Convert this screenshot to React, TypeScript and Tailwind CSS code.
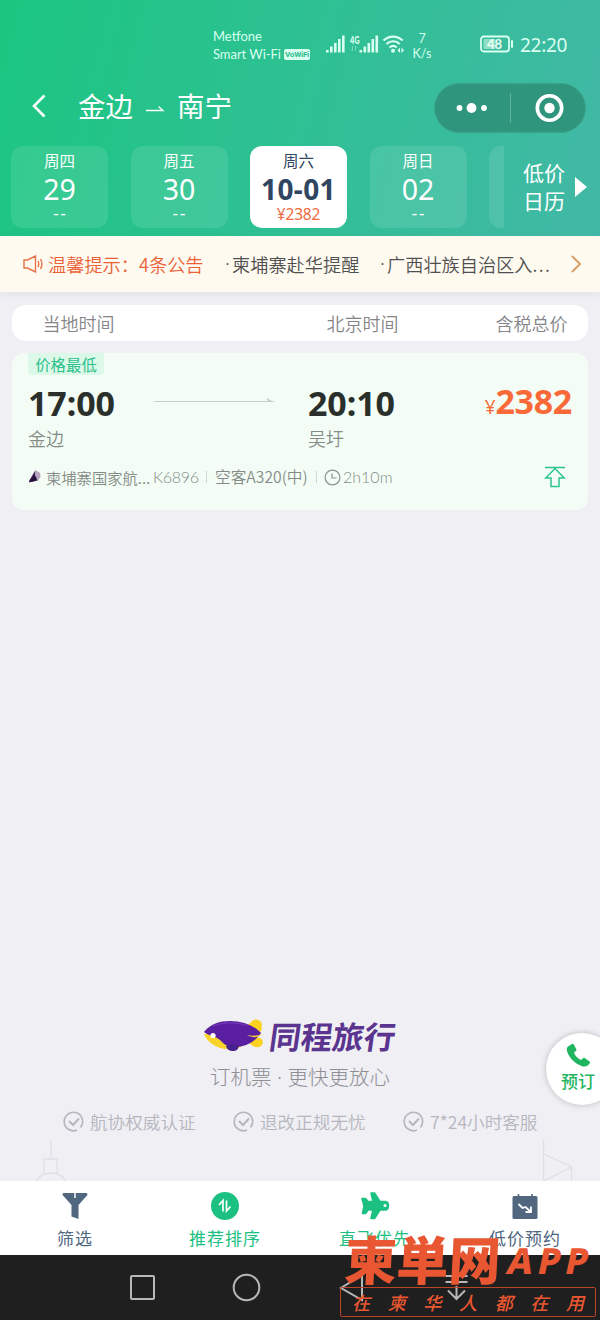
import React from "react";

const days = [
  { week: "周四", day: "29", price: "--" },
  { week: "周五", day: "30", price: "--" },
  { week: "周六", day: "10-01", price: "¥2382", active: true },
  { week: "周日", day: "02", price: "--" },
  { week: "", day: "", price: "" },
];

const promises = [
  { text: "航协权威认证", width: "w-[170px]" },
  { text: "退改正规无忧", width: "w-[170px]" },
  { text: "7*24小时客服", width: "w-[140px]" },
];

const SignalIcons = () => (
  <svg width="80" height="26" viewBox="0 0 80 26" fill="#d9fff0">
    <rect x="0" y="18" width="2.6" height="2.5" />
    <rect x="4" y="14.5" width="2.6" height="6" />
    <rect x="8" y="11" width="2.6" height="9.5" />
    <rect x="12" y="7" width="2.6" height="13.5" />
    <rect x="16" y="3.5" width="2.6" height="17" />
    <text
      x="24"
      y="11.5"
      fontSize="11"
      fontWeight="900"
      textLength="9.5"
      lengthAdjust="spacingAndGlyphs"
    >
      4G
    </text>
    <path
      d="M26.500 14v5m-1.500-1.500 1.500 1.500M29.500 19v-5m1.500 1.500-1.500-1.500"
      stroke="#6fdcb6"
      fill="none"
    />
    <rect x="33.500" y="18" width="2.600" height="2.500" />
    <rect x="37.500" y="14.500" width="2.600" height="6" />
    <rect x="41.500" y="11" width="2.600" height="9.500" />
    <rect x="45.500" y="7" width="2.600" height="13.500" />
    <rect x="49.500" y="3.500" width="2.600" height="17" />
    <g fill="none" stroke="#d9fff0" strokeWidth="2.200">
      <path d="M57.500 8.500c5.500-5.300 13.700-5.300 19.200 0" />
      <path d="M60.500 12c4-3.700 9.300-3.700 13.200 0" />
      <path d="M63.500 15.500c2.200-2 5-2 7.200 0" />
    </g>
    <circle cx="67" cy="18.700" r="2" />
    <path d="m74 15.500-2.500 2.700 2.500 2.700zm1.500 0 2.500 2.700-2.500 2.700z" />
  </svg>
);

const StatusBar = () => (
  <div className="flex h-[83px] pt-[27px] pl-[213px] font-['Lato'] text-[#d9fff0]">
    <div className="w-[113px] shrink-0 pt-px text-[13px] leading-[17.500px] whitespace-nowrap">
      <p>Metfone</p>
      <p className="flex items-center">
        <span className="w-[71px] tracking-[-0.050px]">Smart Wi-Fi</span>
        <span className="flex h-[11px] w-[26px] items-center justify-center rounded-[2px] bg-[#d9fff0] font-['Roboto'] text-[8px] leading-[11px] font-bold tracking-[-0.200px] text-[#2dbd8d]">
          VoWiFi
        </span>
      </p>
    </div>
    <div className="mt-[5px] w-[80px] shrink-0">
      <SignalIcons />
    </div>
    <div className="mt-[4px] ml-[3px] w-[26px] text-center text-[12.500px] leading-[15px]">
      <p>7</p>
      <p>K/s</p>
    </div>
    <svg className="mt-[8px] ml-[45px]" width="34" height="19" viewBox="0 0 34 19">
      <rect x="1" y="1.500" width="28" height="15" rx="3" fill="none" stroke="#d9fff0" strokeWidth="1.800" />
      <rect x="3.500" y="4" width="12" height="10" rx="1" fill="#8fdfc2" />
      <rect x="31" y="5" width="2" height="8" rx="1" fill="#d9fff0" />
      <text x="14.500" y="13.500" fontSize="13" fontWeight="700" textAnchor="middle" fill="#effff8">
        48
      </text>
    </svg>
    <span className="mt-[6px] ml-[6px] font-['Noto_Sans'] text-[19px] leading-[24px] tracking-[-0.300px]">
      22:20
    </span>
  </div>
);

const TitleBar = () => (
  <div className="flex h-[50px] items-center pr-[14px] pl-[30px] text-white">
    <svg className="mt-[-5px]" width="18" height="26" viewBox="0 0 18 26" fill="none" stroke="#fff" strokeWidth="2.600">
      <path d="M14.500 2.500 4 13l10.500 10.500" />
    </svg>
    <div className="mt-[-6px] ml-[30px] flex items-center text-[27.500px] leading-[40px]">
      <span>金边</span>
      <svg className="mt-[6px] mr-[12px] ml-[13px]" width="19" height="8" viewBox="0 0 19 8">
        <path d="M0 6.500h17L12.500 2.500" fill="none" stroke="#fff" strokeWidth="1.300" />
      </svg>
      <span>南宁</span>
    </div>
    <div className="ml-auto flex h-[50px] w-[152px] items-center rounded-full border border-[#39a588] bg-[#2f967d]">
      <svg width="150" height="48" viewBox="0 0 150 48" fill="#fff">
        <circle cx="24.500" cy="24" r="2.900" />
        <circle cx="36.500" cy="24" r="4.900" />
        <circle cx="49" cy="24" r="2.900" />
        <rect x="75" y="9" width="1" height="30" fill="#5fb09c" />
        <circle cx="114.500" cy="24" r="12.200" fill="none" stroke="#fff" strokeWidth="3.600" />
        <circle cx="114.500" cy="24" r="5.200" />
      </svg>
    </div>
  </div>
);

const DayChip = ({ item }: { item: (typeof days)[number] }) => (
  <div
    className={`flex h-[82px] w-[97px] shrink-0 flex-col items-center rounded-[12px] ${
      item.active ? "bg-white text-[#2f4560]" : "bg-white/10 text-white"
    }`}
  >
    <span className="mt-[2px] text-[15.500px] leading-[24px]">{item.week}</span>
    <span
      className={`mt-px font-['Noto_Sans'] leading-[32px] ${
        item.active ? "text-[28px] font-bold tracking-[0.400px]" : "text-[28.500px]"
      }`}
    >
      {item.day}
    </span>
    <span
      className={`leading-[18px] ${
        item.active
          ? "font-['Noto_Sans'] text-[15.500px] tracking-[-0.150px] text-[#f26a3d]"
          : "pl-px font-['Lato'] text-[17px] tracking-[1px]"
      }`}
    >
      {item.price}
    </span>
  </div>
);

const DatePicker = () => (
  <div className="mt-[13px] flex">
    <div className="flex w-[504px] shrink-0 gap-[22.500px] overflow-hidden pl-[11px]">
      {days.map((item, i) => (
        <DayChip key={i} item={item} />
      ))}
    </div>
    <div className="flex h-[82px] items-center pl-[19px] text-[21px] leading-[28px] text-white">
      <p className="mt-[-2px] w-[42px]">低价日历</p>
      <svg className="ml-[10px]" width="12" height="20" viewBox="0 0 12 20">
        <path d="M0 0v20l12-10z" fill="#fff" />
      </svg>
    </div>
  </div>
);

const Dot = () => <span className="w-[7px] font-['Noto_Sans'] text-[20px]">·</span>;

const NoticeBar = () => (
  <div className="flex h-[56px] items-center bg-[#fffaf0] pl-[23px] text-[18.200px] leading-[28px] font-[350] whitespace-nowrap text-[#505050] shadow-[0_2px_8px_rgba(120,120,150,0.12)]">
    <svg width="21" height="18" viewBox="0 0 21 18" fill="none" stroke="#ec7048" strokeWidth="1.400">
      <path d="M1 5v8h3.500l8 4V1l-8 4zM15 6c1 2 1 4 0 6M17.500 4c1.800 3.200 1.800 6.800 0 10" />
    </svg>
    <span className="ml-[4px] w-[91px] text-[#ea5f36]">温馨提示：</span>
    <span className="w-[86px] text-[#ea5f36]">4条公告</span>
    <span className="flex w-[155px]">
      <Dot />
      柬埔寨赴华提醒
    </span>
    <span className="flex w-[189px]">
      <Dot />
      广西壮族自治区入<span className="tracking-[1.300px]">...</span>
    </span>
    <svg width="14" height="18" viewBox="0 0 14 18" fill="none" stroke="#d49a62" strokeWidth="1.800">
      <path d="m3 1 8 8-8 8" />
    </svg>
  </div>
);

const FlightCard = () => (
  <div className="mx-[12px] mt-[12px] h-[157px] rounded-[12px] bg-[#f3fdf5] px-[16px]">
    <div className="flex h-[22px] w-[76px] items-center justify-center rounded-b-[4px] bg-[#dcf8e9] text-[15.400px] leading-[22px] text-[#2cc08a]">
      价格最低
    </div>
    <div className="mt-[7px] flex h-[42px] items-center font-['Noto_Sans'] text-[34px] leading-[42px] font-bold text-[#2a2f2c]">
      <span className="w-[126px] tracking-[-0.100px]">17:00</span>
      <svg className="mt-[-6px]" width="120" height="6" viewBox="0 0 120 6" fill="#c8cfca">
        <path d="M0 4h120v1H0z" />
        <path d="m113 1 7 4h-6z" />
      </svg>
      <span className="ml-[34px] tracking-[-0.100px]">20:10</span>
      <span className="mt-[1px] ml-auto flex items-baseline tracking-[-0.300px] text-[#f96a38]">
        <span className="text-[19px] font-normal">¥</span>2382
      </span>
    </div>
    <div className="flex h-[28px] items-center text-[18px] leading-[28px] font-[350] text-[#858c87]">
      <span className="w-[280px]">金边</span>
      <span>吴圩</span>
    </div>
    <div className="mt-[11px] flex h-[28px] items-center text-[15.500px] leading-[28px] font-[350] whitespace-nowrap text-[#858c87]">
      <svg width="14" height="14" viewBox="0 0 14 14">
        <path d="M7.500 0 1 11v1l6-1z" fill="#49225f" />
        <path d="m7.500 0 4.500 3 .5 4-3 4-2-4z" fill="#b6a3bd" />
        <path d="m6.500 4 3 6.500-8.500 2z" fill="#26113d" />
      </svg>
      <span className="ml-[4px] w-[107px] text-[15.300px]">柬埔寨国家航...</span>
      <span className="w-[53px] font-['Lato'] text-[16px] tracking-[-0.300px]">K6896</span>
      <i className="h-[12px] w-px bg-[#d0d8d2]" />
      <span className="ml-[8px] w-[101px] text-[15.700px]">空客A320(中)</span>
      <i className="h-[12px] w-px bg-[#d0d8d2]" />
      <svg className="ml-[7px]" width="17" height="17" viewBox="0 0 17 17" fill="none" stroke="#8c938e" strokeWidth="1.200">
        <circle cx="8.500" cy="8.500" r="7.400" />
        <path d="M8 4.500V9h4.500" />
      </svg>
      <span className="ml-[2px] font-['Lato'] text-[16px]">2h10m</span>
      <svg className="mr-[6px] ml-auto" width="22" height="22" viewBox="0 0 22 22" fill="none" stroke="#2fc48d" strokeWidth="1.500">
        <path d="M1 1.500h20M11 2.500 1.800 12H7v8.500h8V12h5.200z" />
      </svg>
    </div>
  </div>
);

const Brand = () => (
  <div className="flex flex-col items-center">
    <div className="flex h-[40px] items-center">
      <svg width="62" height="36" viewBox="0 0 62 36">
        <circle cx="53" cy="8.500" r="6" fill="#fbd21f" />
        <path d="M44 8c4-2 7-4 10-4l5 8-5 9c5-1 8 4 4 8-4 3-9 0-13-4z" fill="#fbd21f" />
        <path d="M1 17c3 8 13 15 23 15 6 1 13-1 17-4L28 15z" fill="#f8d42a" />
        <path d="M1 15C7 7 17 4 27 4c13 0 25 5 31 12-7 10-16 14-26 14-7 0-10-2-14-6-4-5-11-4-17-9z" fill="#5a1fa0" />
        <path d="M10 9c10-4 24-4 35-.5" fill="none" stroke="#7038b4" strokeWidth="1.200" />
        <path d="M44 18c5 1 10 1 15-1-4 4-9 4-15 1z" fill="#f8d42a" />
        <path d="M23 29c4-2 9-2 13 0-1 4-3 5-6 5s-6-1-7-5z" fill="#47218b" />
        <circle cx="10" cy="18.500" r="2.600" fill="#fff" />
      </svg>
      <span className="ml-[5px] -skew-x-[8deg] text-[31.500px] leading-[40px] font-bold text-[#5a348f]">
        同程旅行
      </span>
    </div>
    <p className="mt-[7px] text-[20.500px] leading-[28px] font-light text-[#8e8e94]">
      订机票<span className="inline-block w-[16px] text-center font-['Noto_Sans']">·</span>更快更放心
    </p>
  </div>
);

const Promises = () => (
  <div className="mt-[16px] flex pl-[63px] text-[17.600px] leading-[30px] font-[350] whitespace-nowrap text-[#b6b6be]">
    {promises.map((item) => (
      <div key={item.text} className={`flex shrink-0 items-center gap-[6px] ${item.width}`}>
        <svg className="mt-[-2px]" width="21" height="21" viewBox="0 0 21 21" fill="none" stroke="#b6b6be" strokeWidth="1.700">
          <path d="M14 19a9.200 9.200 0 1 1 3.500-2.600" />
          <path d="m6 10 4 4 6-6.500" strokeWidth="2" />
        </svg>
        <span>{item.text}</span>
      </div>
    ))}
  </div>
);

const Skyline = () => (
  <svg className="mt-[3px]" width="600" height="41" viewBox="0 0 600 41" fill="none" stroke="#dfdfe5" strokeWidth="1.300">
    <path d="M51 0v18M44 33V19h13v14M36 41c4-6 9-8 15-8s11 2 15 8M543.500 0v41M543.500 14l28 13v14M543.500 41l28-14" />
  </svg>
);

const TabItem = ({ label, color, children }: { label: string; color: string; children: React.ReactNode }) => (
  <div className={`flex flex-1 flex-col items-center pt-[10px] ${color}`}>
    <svg width="30" height="30" viewBox="0 0 30 30" fill="currentColor">
      {children}
    </svg>
    <span className="mt-[3px] text-[17px] leading-[28px] tracking-[1px]">{label}</span>
  </div>
);

const TabBar = () => (
  <div className="flex h-[74px] bg-white">
    <TabItem label="筛选" color="text-[#50677f]">
      <path d="M4 2h22c1.500 0 2 1.500 1 2.500L18.500 14v14l-7-2.500V14L3 4.500C2 3.500 2.500 2 4 2z" />
      <path d="M15 2v5" stroke="#fff" strokeWidth="1.500" />
    </TabItem>
    <TabItem label="推荐排序" color="text-[#1cc182]">
      <circle cx="15" cy="15" r="14" />
      <path d="m9 14 4-4.500v11M16.500 9.500v10.500l4-4.500" fill="none" stroke="#fff" strokeWidth="1.700" />
    </TabItem>
    <TabItem label="直飞优先" color="text-[#1cc182]">
      <path
        d="M11 2h3.500l5.500 8.500h5c4.500 0 4.500 8.500 0 8.500h-5l-5.500 8.500H11L13 19H8l-2.500 3.500H2.500L4 15 2 7.500h3.500L8 10.500h5z"
        stroke="currentColor"
        strokeWidth="1.600"
        strokeLinejoin="round"
      />
      <circle cx="25" cy="14.500" r="1.500" fill="#fff" />
    </TabItem>
    <TabItem label="低价预约" color="text-[#50677f]">
      <rect x="2.500" y="5" width="25" height="23" rx="1.500" />
      <path d="M8.500 3v4M22 3v4" stroke="currentColor" strokeWidth="1.600" />
      <path d="m8.500 13 4 4 3-1 5 4.500M21 15.500V21h-5.500" fill="none" stroke="#fff" strokeWidth="1.800" />
    </TabItem>
  </div>
);

const SystemNav = () => (
  <div className="flex h-[65px] items-center bg-[#1f1f1f] pl-[129px]">
    <svg width="342" height="30" viewBox="0 0 342 30" fill="none" stroke="#b8b8b8" strokeWidth="2">
      <rect x="2" y="3" width="23" height="23" rx="1" />
      <circle cx="117.500" cy="14.500" r="12.800" />
      <path d="M233 2 212 15l21 12z" />
      <path d="M316.500 3h22M316.500 9h22M327.500 13v12M319 17.500l8.500 8.500 8.500-8.500" />
    </svg>
  </div>
);

// Site stamp that floats over the bottom right corner
const Stamp = () => (
  <div className="absolute right-[4px] bottom-[3px] w-[256px] text-[#e85732]">
    <div className="flex h-[54px] items-center whitespace-nowrap">
      <span className="mt-[-4px] w-[166px] -skew-x-3 pl-[5px] text-[52px] leading-[54px] font-black">
        柬単网
      </span>
      <span className="mt-[1px] -skew-x-12 pl-[2px] font-['Noto_Sans'] text-[36px] leading-[54px] font-extrabold tracking-[5px]">
        APP
      </span>
    </div>
    <div className="flex h-[30px] items-center justify-between rounded-[2px] border border-[#b8452a] pr-[11px] pl-[11px] text-[18px] leading-[28px] font-medium italic">
      {["在", "柬", "华", "人", "都", "在", "用"].map((char, i) => (
        <span key={i}>{char}</span>
      ))}
    </div>
  </div>
);

export default function App() {
  return (
    <div className="relative flex h-[1320px] w-[600px] flex-col overflow-hidden bg-[#efeff4] font-['Noto_Sans_CJK_SC',sans-serif]">
      <header className="h-[236px] shrink-0 bg-[linear-gradient(105deg,#1bc680_0%,#2fc094_50%,#42b8a6_100%)]">
        <StatusBar />
        <TitleBar />
        <DatePicker />
      </header>
      <NoticeBar />

      <main className="flex flex-1 flex-col">
        <div className="mx-[12px] mt-[13px] flex h-[36px] items-center rounded-[14px] bg-white pl-[30.500px] text-[18px] leading-[28px] font-[350] text-[#858589]">
          <span className="w-[284px]">当地时间</span>
          <span className="w-[169px]">北京时间</span>
          <span>含税总价</span>
        </div>
        <FlightCard />
        <div className="mt-auto">
          <Brand />
          <Promises />
          <Skyline />
        </div>
      </main>

      <TabBar />
      <SystemNav />

      {/* Floating booking button */}
      <div className="absolute top-[1033px] left-[546px] flex h-[72px] w-[72px] flex-col rounded-full bg-white pt-[10px] text-[#1fb561] shadow-[0_0_6px_rgba(0,0,0,0.22)]">
        <svg className="ml-[20px]" width="25" height="25" viewBox="0 0 25 25" fill="currentColor">
          <path d="M2 3.500 6 1c1-.5 1.500 0 2 1l2.200 4c.5 1 .2 1.600-.4 2.100L8 9.700c1 3 4 6 7 7.200l2-1.700c.7-.5 1.300-.5 2 0l4.300 3c.8.6 1 1.300.4 2-2 3-4.500 4-8.200 2.700C8.500 20.400 3 14.500 1 8c-.5-2 0-3.500 1-4.500z" />
        </svg>
        <span className="ml-[15px] text-[17px] leading-[26px] font-medium">预订</span>
      </div>
      <Stamp />
    </div>
  );
}
